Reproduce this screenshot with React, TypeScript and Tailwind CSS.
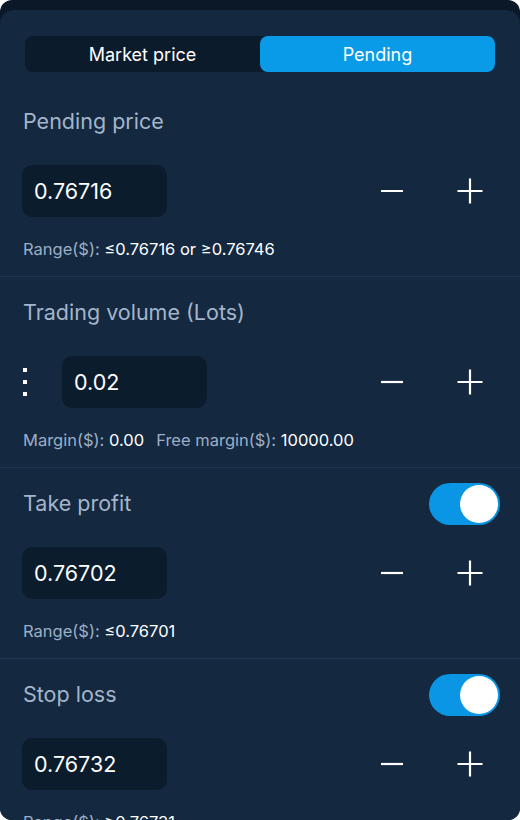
const font = { fontFamily: 'Inter, "Noto Sans", sans-serif' }

function Minus() {
  return (
    <svg width="24" height="24" viewBox="0 0 24 24" className="text-white">
      <path d="M1 12h22" stroke="currentColor" strokeWidth="2.2" />
    </svg>
  )
}

function Plus() {
  return (
    <svg width="26" height="26" viewBox="0 0 26 26" className="text-white">
      <path d="M0.5 13h25M13 0.5v25" stroke="currentColor" strokeWidth="2.2" />
    </svg>
  )
}

function Stepper() {
  return (
    <div className="ml-auto flex items-center gap-[53px] pr-[37px]">
      <Minus />
      <Plus />
    </div>
  )
}

function Toggle() {
  return (
    <div className="w-[71px] h-[42px] rounded-full bg-[#0a96e4] flex items-center justify-end pr-[2px]">
      <div className="w-[38px] h-[38px] rounded-full bg-white" />
    </div>
  )
}

function ValueBox({ value }: { value: string }) {
  return (
    <div className="w-[145px] h-[52px] rounded-[10px] bg-[#0b1c2d] flex items-center px-3 text-[21.5px] text-white">
      {value}
    </div>
  )
}

function Section({
  title,
  toggle,
  dots,
  value,
  children,
  border = true,
}: {
  title: string
  toggle?: boolean
  dots?: boolean
  value: string
  children: React.ReactNode
  border?: boolean
}) {
  return (
    <section className={border ? 'border-t border-[#1f3550]' : 'pt-px'}>
      <div className="h-[71px] flex items-center pl-[23px] pr-[20px]">
        <h3 className="text-[21.5px] text-[#a3b5cb]">{title}</h3>
        {toggle && <div className="ml-auto"><Toggle /></div>}
      </div>
      <div className="mt-2 h-[52px] flex items-center pl-[22px]">
        {dots && (
          <div className="flex flex-col gap-[8px] w-[40px] pl-[1px]">
            <span className="w-[4px] h-[4px] bg-white" />
            <span className="w-[4px] h-[4px] bg-white" />
            <span className="w-[4px] h-[4px] bg-white" />
          </div>
        )}
        <ValueBox value={value} />
        <Stepper />
      </div>
      <div className="mt-[22px] h-[20px] flex items-center pl-[23px] whitespace-nowrap text-[16.5px] text-[#9cafc6]">
        {children}
      </div>
      <div className="h-[17px]" />
    </section>
  )
}

export default function App() {
  return (
    <div className="w-[520px] h-[820px] bg-white overflow-hidden" style={font}>
      <div className="h-full rounded-[12px] bg-[#0b1828] pt-[10px] overflow-hidden">
        <div className="h-full rounded-t-[14px] bg-[#14283f]">
          <div className="pt-[26px] px-[25px]">
            <div className="flex h-9 rounded-[8px] bg-[#0b1b2c] text-[18px] text-white">
              <button className="flex-1 flex items-center justify-center">Market price</button>
              <button className="flex-1 flex items-center justify-center rounded-[8px] bg-[#0a9be8]">
                Pending
              </button>
            </div>
          </div>
          <div className="h-[13px]" />

          <Section title="Pending price" value="0.76716" border={false}>
            Range($):&nbsp;<span className="text-white">≤0.76716 or ≥0.76746</span>
          </Section>

          <Section title="Trading volume (Lots)" value="0.02" dots>
            Margin($):&nbsp;<span className="text-white">0.00</span>
            <span className="ml-3">Free margin($):&nbsp;</span>
            <span className="text-white">10000.00</span>
          </Section>

          <Section title="Take profit" value="0.76702" toggle>
            Range($):&nbsp;<span className="text-white">≤0.76701</span>
          </Section>

          <Section title="Stop loss" value="0.76732" toggle>
            Range($):&nbsp;<span className="text-white">≥0.76731</span>
          </Section>
        </div>
      </div>
    </div>
  )
}
